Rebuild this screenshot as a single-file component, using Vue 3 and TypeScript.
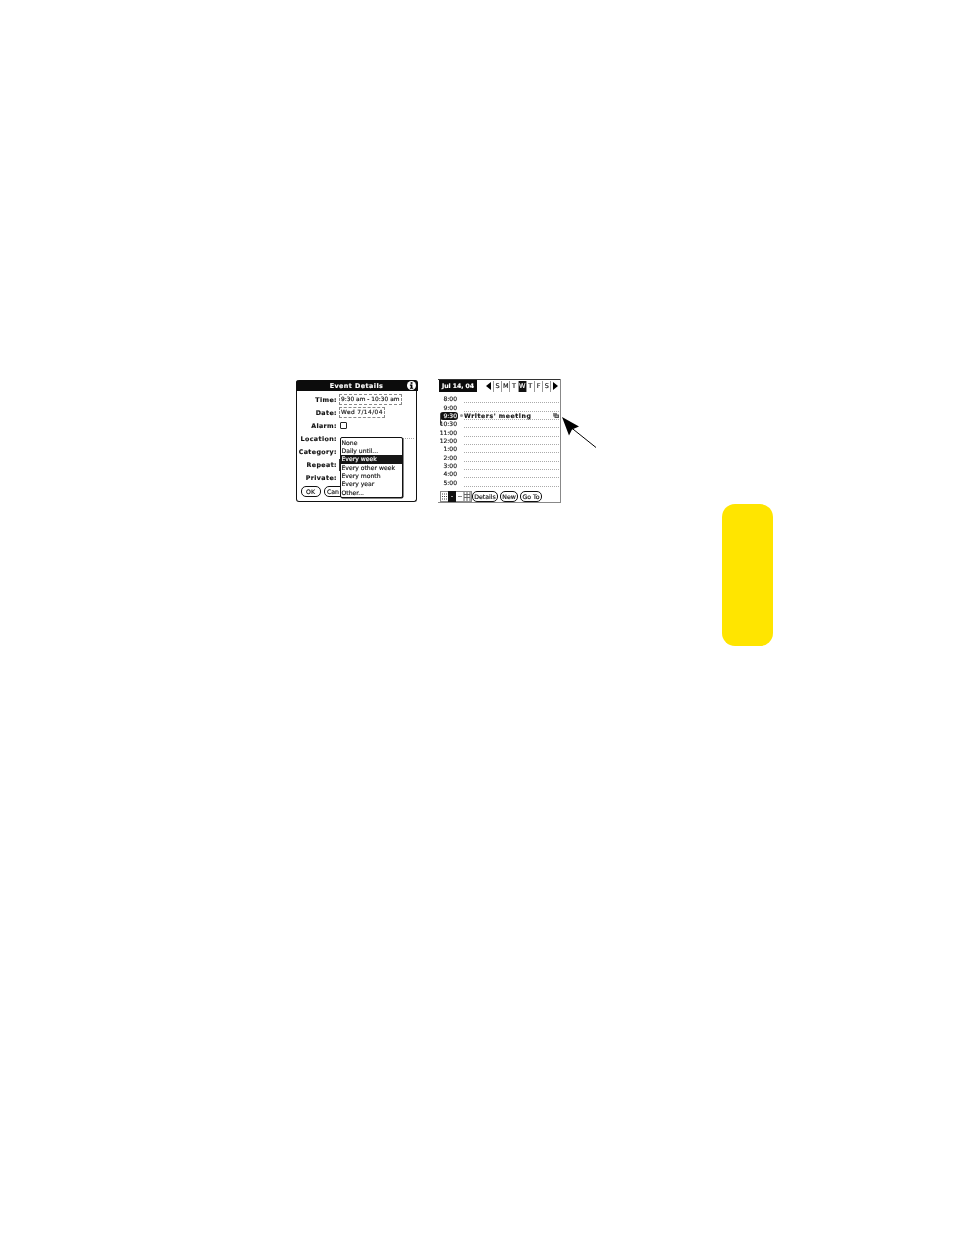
<script setup lang="ts">
const formRows = [
  { label: 'Time:', kind: 'box', value: '9:30 am - 10:30 am' },
  { label: 'Date:', kind: 'box', value: 'Wed 7/14/04' },
  { label: 'Alarm:', kind: 'check', value: '' },
  { label: 'Location:', kind: 'line', value: '' },
  { label: 'Category:', kind: 'none', value: '' },
  { label: 'Repeat:', kind: 'repeat', value: '' },
  { label: 'Private:', kind: 'none', value: '' },
]
const menu = ['None', 'Daily until...', 'Every week', 'Every other week', 'Every month', 'Every year', 'Other...']
const days = ['S', 'M', 'T', 'W', 'T', 'F', 'S']
const times = ['8:00', '9:00', '9:30', '10:30', '11:00', '12:00', '1:00', '2:00', '3:00', '4:00', '5:00']
</script>

<template>
  <div class="page">
    <div class="figures">
      <section class="screen details">
        <header class="title">
          <span>Event Details</span>
          <svg class="info" width="9" height="9" viewBox="0 0 9 9">
            <circle cx="4.5" cy="4.5" r="4.5" fill="#fff" />
            <rect x="3.6" y="1.2" width="1.9" height="1.6" fill="#000" />
            <path d="M2.9 3.6H5.4V6.7H6.2V7.8H2.9V6.7H3.7V4.7H2.9Z" fill="#000" />
          </svg>
        </header>
        <div class="form">
          <div v-for="row in formRows" :key="row.label" class="form-row">
            <span class="label">{{ row.label }}</span>
            <span v-if="row.kind === 'box'" class="field">{{ row.value }}</span>
            <span v-else-if="row.kind === 'check'" class="check"></span>
            <span v-else-if="row.kind === 'line'" class="loc-line"></span>
            <span v-else-if="row.kind === 'repeat'" class="repeat-box"></span>
          </div>
        </div>
        <div class="form-buttons">
          <span class="pill ok">OK</span>
          <span class="pill cancel">Can</span>
        </div>
        <ul class="menu">
          <li v-for="item in menu" :key="item" :class="{ active: item === 'Every week' }">{{ item }}</li>
        </ul>
      </section>

      <section class="screen day">
        <header class="day-head">
          <span class="date-tab">Jul 14, 04</span>
          <span class="arrow-left"></span>
          <span class="week">
            <span v-for="(d, i) in days" :key="i" class="dow" :class="{ today: i === 3 }">{{ d }}</span>
          </span>
          <span class="arrow-right"></span>
        </header>
        <div class="agenda">
          <div v-for="t in times" :key="t" class="slot" :class="{ current: t === '9:30' }">
            <span class="time">{{ t }}</span>
            <span class="mark"></span>
            <span class="entry">
              <template v-if="t === '9:30'">
                <b class="event">Writers' meeting</b>
                <svg class="repeat-icon" width="6" height="5" viewBox="0 0 6 5">
                  <rect x="0" y="0" width="4" height="3.5" fill="#888" />
                  <rect x="1.5" y="1.5" width="4.5" height="3.5" fill="#555" />
                  <rect x="2.5" y="2.5" width="2.5" height="1.5" fill="#aaa" />
                </svg>
              </template>
            </span>
          </div>
        </div>
        <footer class="day-foot">
          <svg class="views" width="32" height="11" viewBox="0 0 32 11">
            <rect x="0.5" y="0.5" width="31" height="10" fill="#fff" stroke="#888" />
            <rect x="8" y="0" width="8" height="11" fill="#111" />
            <path d="M2 3H7M2 5.5H7M2 8H7" stroke="#444" stroke-dasharray="1 1" />
            <rect x="11" y="5" width="2" height="1" fill="#999" />
            <path d="M18 5.5H22" stroke="#888" />
            <path d="M24 1V10M27 1V10M30 1V10M24 3.5H30M24 6.5H30" stroke="#666" />
          </svg>
          <span class="pill details-btn">Details</span>
          <span class="pill new-btn">New</span>
          <span class="pill goto-btn">Go To</span>
        </footer>
      </section>

      <svg class="pointer" width="40" height="36" viewBox="0 0 40 36">
        <path d="M1 1L18 10.5L11 13.5L8 19.5Z" fill="#000" />
        <path d="M10 11.5L35 31.5" stroke="#000" stroke-width="1" fill="none" />
      </svg>
    </div>
    <div class="tab"></div>
  </div>
</template>

<style>
html, body { margin: 0; background: #fff; }
</style>

<style scoped>
.page {
  position: relative;
  width: 954px;
  height: 1235px;
  padding: 379px 0 0 296px;
  box-sizing: border-box;
  background: #fff;
  overflow: hidden;
  font-family: "DejaVu Sans", "Liberation Sans", sans-serif;
  color: #111;
}
.figures {
  position: relative;
  display: flex;
  align-items: flex-start;
  gap: 21px;
  will-change: transform;
  -webkit-text-stroke: 0.15px;
}
.screen {
  position: relative;
  box-sizing: border-box;
}

/* Left screen */
.details {
  width: 121px;
  height: 122px;
  margin-top: 1px;
  border: 1px solid #111;
  border-width: 0 1.5px 1.5px 1.5px;
  border-radius: 3px;
}
.title {
  position: relative;
  height: 11px;
  margin: 0 -1.5px;
  background: #0c0c0c;
  border-radius: 3px 3px 0 0;
  color: #fff;
  font-size: 6.4px;
  font-weight: 700;
  line-height: 12px;
  letter-spacing: 0.45px;
  text-align: center;
}
.info {
  position: absolute;
  top: 1px;
  right: 1.5px;
}
.form {
  display: flex;
  flex-direction: column;
  padding-top: 2px;
}
.form-row {
  display: flex;
  align-items: center;
  gap: 2px;
  height: 13px;
}
.label {
  width: 40px;
  flex: none;
  font-size: 6.3px;
  font-weight: 700;
  letter-spacing: 0.4px;
  text-align: right;
  white-space: nowrap;
}
.field {
  padding: 0 1px;
  height: 9px;
  border: 1px dashed #888;
  font-size: 5.9px;
  line-height: 9px;
  white-space: nowrap;
}
.form-row:nth-child(2) .field {
  letter-spacing: 0.4px;
}
.check {
  width: 5px;
  height: 5px;
  margin-left: 1px;
  border: 1px solid #222;
  border-radius: 1px;
}
.loc-line {
  width: 11px;
  margin-left: 64px;
  border-top: 1px dotted #aaa;
}
.repeat-box {
  width: 4px;
  height: 10px;
  border: 1px solid #333;
}
.form-buttons {
  display: flex;
  gap: 3.5px;
  padding: 2px 0 0 3.5px;
}
.pill {
  box-sizing: border-box;
  height: 11px;
  padding: 0 2px;
  border: 1px solid #111;
  border-radius: 5px;
  font-size: 6.2px;
  line-height: 9px;
  text-align: center;
  white-space: nowrap;
}
.ok {
  width: 20px;
}
.cancel {
  width: 34px;
  text-align: left;
}
.menu {
  position: absolute;
  left: 42.5px;
  top: 57px;
  box-sizing: border-box;
  width: 63px;
  height: 61px;
  margin: 0;
  padding: 0.5px 0 0;
  list-style: none;
  background: #fff;
  border: 1px solid #111;
  border-radius: 2px;
  box-shadow: 0.5px 0.5px 0 #111;
}
.menu li {
  height: 8.4px;
  padding-left: 1px;
  font-size: 6.1px;
  line-height: 8.4px;
  white-space: nowrap;
}
.menu li.active {
  background: #161616;
  color: #fff;
}

/* Right screen */
.day {
  width: 123px;
  height: 124px;
  border-right: 1px solid #888;
  border-bottom: 1px solid #888;
}
.day-head {
  display: flex;
  align-items: center;
  height: 13px;
  border-top: 1px solid #333;
  box-sizing: border-box;
  padding-left: 1px;
}
.date-tab {
  box-sizing: border-box;
  width: 38px;
  height: 12px;
  background: #0c0c0c;
  color: #fff;
  font-size: 6.1px;
  font-weight: 700;
  line-height: 12px;
  text-align: center;
  white-space: nowrap;
}
.arrow-left {
  width: 0;
  height: 0;
  margin-left: 9px;
  border-top: 4.5px solid transparent;
  border-bottom: 4.5px solid transparent;
  border-right: 5px solid #000;
}
.week {
  display: flex;
  margin-left: 2px;
  border-left: 1px solid #999;
}
.dow {
  box-sizing: border-box;
  width: 8.2px;
  height: 11px;
  border-right: 1px solid #999;
  font-size: 6.5px;
  line-height: 11px;
  text-align: center;
}
.dow.today {
  background: #111;
  color: #fff;
}
.arrow-right {
  width: 0;
  height: 0;
  margin-left: 2px;
  border-top: 4.5px solid transparent;
  border-bottom: 4.5px solid transparent;
  border-left: 5px solid #000;
}
.agenda {
  display: flex;
  flex-direction: column;
  padding-top: 3px;
}
.slot {
  position: relative;
  display: flex;
  align-items: center;
  height: 8.35px;
}
.time {
  box-sizing: border-box;
  width: 20px;
  padding-right: 1px;
  font-size: 6px;
  line-height: 8px;
  text-align: right;
}
.current .time {
  margin-left: 1.5px;
  width: 18.5px;
  height: 8.5px;
  background: #111;
  color: #fff;
  border-radius: 3px;
}
.current::before {
  content: "";
  position: absolute;
  left: 1.5px;
  top: 2px;
  height: 11px;
  border-left: 1px solid #444;
}
.mark {
  width: 6px;
  flex: none;
}
.current .mark::after {
  content: "";
  display: block;
  width: 3px;
  height: 3px;
  margin-left: 1.5px;
  border-radius: 50%;
  background: #999;
}
.entry {
  display: flex;
  align-items: center;
  justify-content: space-between;
  box-sizing: border-box;
  width: 95px;
  height: 8.35px;
  border-bottom: 1px dotted #aaa;
}
.event {
  margin-top: 1px;
  font-size: 6.2px;
  letter-spacing: 0.55px;
  line-height: 8px;
  white-space: nowrap;
}
.day-foot {
  display: flex;
  align-items: center;
  gap: 2px;
  margin-top: 4px;
  padding-left: 2px;
}
.day-foot .pill {
  padding: 0;
}
.views {
  margin-right: -2px;
}
.details-btn {
  width: 26px;
}
.new-btn {
  width: 18px;
}
.goto-btn {
  width: 22px;
}
.pointer {
  position: absolute;
  left: 265px;
  top: 37px;
}

.tab {
  position: absolute;
  left: 722px;
  top: 504px;
  width: 50.5px;
  height: 142px;
  border-radius: 13px;
  background: #ffe500;
}
</style>
